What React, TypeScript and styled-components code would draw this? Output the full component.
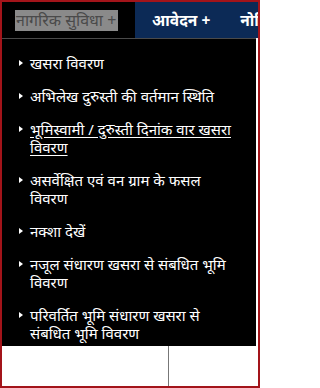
import React from 'react';
import styled, { createGlobalStyle } from 'styled-components';

const Global = createGlobalStyle`
  html, body { margin: 0; padding: 0; background: #fff; }
  body { font-family: "Noto Sans", "Liberation Sans", sans-serif; }
`;

const Frame = styled.div`
  width: 260px;
  height: 388px;
  box-sizing: border-box;
  border: 2px solid #a3141a;
  background: #fff;
  overflow: hidden;
  display: flex;
  flex-direction: column;
`;

const NavBar = styled.div`
  display: flex;
  height: 36px;
  background: #000;
  flex: 0 0 auto;
`;

const NavItem = styled.div<{ $active?: boolean; $width: number; $pad: number }>`
  display: flex;
  align-items: center;
  gap: 30px;
  padding-left: ${({ $pad }) => $pad}px;
  width: ${({ $width }) => $width}px;
  flex: 0 0 auto;
  background: ${({ $active }) => ($active ? '#0c2a56' : '#000')};
  box-sizing: border-box;
  overflow: hidden;
`;

const HoverLabel = styled.span`
  background: #8a8a8a;
  color: #4a4a4a;
  font-size: 16px;
  line-height: 21px;
  padding: 0 2px 0 1px;
  white-space: nowrap;
`;

const NavLabel = styled.span`
  color: #fff;
  font-size: 15.5px;
  font-weight: 700;
  white-space: nowrap;
`;

const Body = styled.div`
  display: flex;
  flex: 0 0 auto;
  height: 308px;
`;

const Dropdown = styled.ul`
  list-style: none;
  margin: 0;
  padding: 15px 18px 0 28px;
  width: 254px;
  height: 308px;
  box-sizing: border-box;
  background: #000;
  border-top: 1px solid #4a4a4a;
  display: flex;
  flex-direction: column;
  gap: 15px;
`;

const Item = styled.li<{ $underline?: boolean }>`
  position: relative;
  color: #fff;
  font-size: 15px;
  line-height: 18px;
  text-decoration: ${({ $underline }) => ($underline ? 'underline' : 'none')};
  text-underline-offset: 2px;
  &::before {
    content: '';
    position: absolute;
    left: -11px;
    top: 6px;
    border-left: 4px solid #fff;
    border-top: 3px solid transparent;
    border-bottom: 3px solid transparent;
  }
`;

const SideStrip = styled.div`
  flex: 1;
  background: #fff;
`;

const Footer = styled.div`
  display: flex;
  flex: 1;
  background: #fff;
`;

const FooterCell = styled.div`
  width: 166px;
  border-right: 1px solid #777;
`;

const items: { label: string; underline?: boolean }[] = [
  { label: 'खसरा विवरण' },
  { label: 'अभिलेख दुरुस्ती की वर्तमान स्थिति' },
  { label: 'भूमिस्वामी / दुरुस्ती दिनांक वार खसरा विवरण', underline: true },
  { label: 'असर्वेक्षित एवं वन ग्राम के फसल विवरण' },
  { label: 'नक्शा देखें' },
  { label: 'नजूल संधारण खसरा से संबधित भूमि विवरण' },
  { label: 'परिवर्तित भूमि संधारण खसरा से संबधित भूमि विवरण' },
];

export default function App() {
  return (
    <>
      <Global />
      <Frame>
        <NavBar>
          <NavItem $width={133} $pad={13}>
            <HoverLabel>नागरिक सुविधा +</HoverLabel>
          </NavItem>
          <NavItem $active $width={123} $pad={17}>
            <NavLabel>आवेदन +</NavLabel>
            <NavLabel>नोटिस</NavLabel>
          </NavItem>
        </NavBar>
        <Body>
          <Dropdown>
            {items.map((it) => (
              <Item key={it.label} $underline={it.underline}>
                {it.label}
              </Item>
            ))}
          </Dropdown>
          <SideStrip />
        </Body>
        <Footer>
          <FooterCell />
        </Footer>
      </Frame>
    </>
  );
}
